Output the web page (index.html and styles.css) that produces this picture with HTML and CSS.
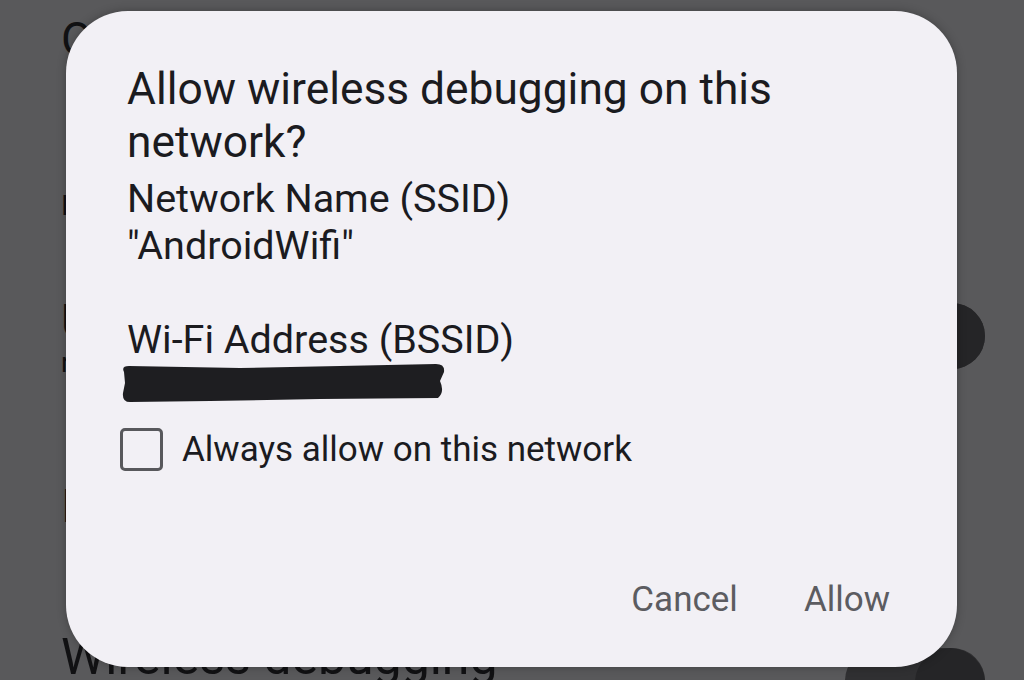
FILE: index.html
```html
<!DOCTYPE html>
<html lang="en">
<head>
<meta charset="utf-8">
<title>Allow wireless debugging</title>
<link rel="stylesheet" href="styles.css">
</head>
<body>
<div class="screen">
  <div class="settings">
    <div class="row row-top"><span class="big">On</span></div>
    <div class="row row-small"><span class="small">I</span></div>
    <div class="row row-toggle">
      <div class="row-text"><span class="big">U</span><span class="small">r</span></div>
      <div class="toggle"><div class="thumb"></div></div>
    </div>
    <div class="row row-mid"><span class="big">I</span></div>
    <div class="row row-bottom">
      <span class="big bottom-text">Wireless debugging</span>
      <div class="toggle toggle-low"><div class="thumb"></div></div>
    </div>
  </div>

  <div class="dialog">
    <h1 class="title">Allow wireless debugging on this network?</h1>
    <div class="body">
      <div>Network Name (SSID)</div>
      <div>"AndroidWifi"</div>
      <div class="blank">&nbsp;</div>
      <div>Wi-Fi Address (BSSID)</div>
    </div>
    <svg class="redact" width="326" height="40" viewBox="0 0 326 40">
      <path d="M4 9 Q1 3 9 3 L120 5 L220 3 L316 1 Q325 1 324 9 L320 18 Q325 29 318 35 L200 36 L90 38 L10 39 Q2 39 3 30 L5 20 Z" fill="#1e1e21"/>
    </svg>
    <label class="check-row">
      <span class="checkbox"></span>
      <span class="check-label">Always allow on this network</span>
    </label>
    <div class="actions">
      <span class="btn">Cancel</span>
      <span class="btn">Allow</span>
    </div>
  </div>
</div>
</body>
</html>
```
FILE: styles.css
```css
* { box-sizing: border-box; }

html, body {
  margin: 0;
  padding: 0;
}

body {
  background: #59595b;
  font-family: Roboto, "Noto Sans", "Liberation Sans", sans-serif;
}

.screen {
  position: relative;
  width: 1024px;
  height: 680px;
  overflow: hidden;
  background: #59595b;
}

.settings {
  padding: 0 39px 0 61px;
  color: #111113;
}

.row {
  display: flex;
  align-items: center;
  justify-content: space-between;
}

.big {
  font-size: 46px;
  line-height: 54px;
}

.small {
  font-size: 28px;
  line-height: 30px;
}

.row-top { height: 70px; padding-top: 8px; }
.row-small { height: 60px; margin-top: 106px; }
.row-toggle { height: 110px; margin-top: 45px; }
.row-text { display: flex; flex-direction: column; }
.row-mid { height: 60px; margin-top: 85px; }
.row-bottom { margin-top: 92px; height: 100px; align-items: flex-start; }

.bottom-text {
  font-size: 50px;
  line-height: 58px;
}

.toggle {
  position: relative;
  width: 140px;
  height: 66px;
  border-radius: 33px;
  background: #303032;
}

.thumb {
  position: absolute;
  right: 0;
  top: 0;
  width: 66px;
  height: 66px;
  border-radius: 50%;
  background: #252527;
}

.toggle-low {
  margin-top: 20px;
  width: 140px;
  height: 70px;
}
.toggle-low .thumb { width: 70px; height: 70px; }

.dialog {
  position: absolute;
  left: 66px;
  top: 11px;
  width: 891px;
  height: 656px;
  border-radius: 62px;
  background: #f2f0f5;
  box-shadow: 0 0 10px rgba(0, 0, 0, 0.28);
  padding: 52px 67px 43px 61px;
  display: flex;
  flex-direction: column;
  color: #1b1b1f;
}

.title {
  margin: 0;
  font-weight: 400;
  font-size: 44.3px;
  line-height: 53px;
  max-width: 700px;
}

.body {
  margin-top: 6px;
  font-size: 39.5px;
  line-height: 47px;
}

.redact {
  display: block;
  margin-left: -7px;
}

.check-row {
  display: flex;
  align-items: center;
  gap: 19px;
  margin-top: 25px;
  margin-left: -7px;
}

.checkbox {
  width: 43px;
  height: 43px;
  border: 3.5px solid #58585c;
  border-radius: 5px;
  flex: none;
}

.check-label {
  font-size: 35px;
  line-height: 43px;
}

.actions {
  margin-top: auto;
  display: flex;
  justify-content: flex-end;
  gap: 66px;
}

.btn {
  font-size: 35px;
  line-height: 48px;
  color: #5c5c61;
}
```
